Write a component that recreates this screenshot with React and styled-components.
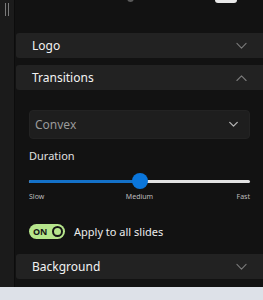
import { useState } from "react";
import styled, { createGlobalStyle } from "styled-components";

const GlobalStyle = createGlobalStyle`
  html, body {
    margin: 0;
    padding: 0;
    background: #dde1e8;
  }
  body {
    font-family: "Noto Sans", "Liberation Sans", sans-serif;
  }
`;

function Chevron({ up, color = "#7a7a7a", width = 11, strokeWidth = 1.2 }) {
  return (
    <svg width={width} height={width / 2 + 2} viewBox="0 0 12 8" fill="none">
      <polyline
        points={up ? "1,7 6,2 11,7" : "1,1.5 6,6.5 11,1.5"}
        stroke={color}
        strokeWidth={strokeWidth}
        strokeLinecap="round"
        strokeLinejoin="round"
      />
    </svg>
  );
}

function Section({ title, open, children }) {
  return (
    <SectionBox>
      <SectionHeader>
        <span>{title}</span>
        <Chevron up={open} />
      </SectionHeader>
      {open && <SectionBody>{children}</SectionBody>}
    </SectionBox>
  );
}

function App() {
  const [duration, setDuration] = useState(50);
  const [applyAll, setApplyAll] = useState(true);

  return (
    <>
      <GlobalStyle />
      <Sidebar>
        <Rail>
          <Handle />
        </Rail>
        <Panel>
          <TopRow>
            <TopDot />
            <TopPill />
          </TopRow>
          <Section title="Logo" />
          <Section title="Transitions" open>
            <Select>
              <span>Convex</span>
              <Chevron color="#b0b0b0" width={9} strokeWidth={1.8} />
            </Select>
            <FieldLabel>Duration</FieldLabel>
            <Slider>
              <Track>
                <Fill style={{ width: `${duration}%` }} />
              </Track>
              <Thumb style={{ left: `${duration}%` }} />
              <RangeInput
                type="range"
                min="0"
                max="100"
                value={duration}
                onChange={(e) => setDuration(Number(e.target.value))}
              />
            </Slider>
            <Ticks>
              <Tick>Slow</Tick>
              <Tick $align="center">Medium</Tick>
              <Tick $align="end">Fast</Tick>
            </Ticks>
            <ToggleRow>
              <Toggle $on={applyAll} onClick={() => setApplyAll(!applyAll)}>
                <span>{applyAll ? "ON" : "OFF"}</span>
                <Knob />
              </Toggle>
              <ToggleLabel>Apply to all slides</ToggleLabel>
            </ToggleRow>
          </Section>
          <Section title="Background" />
        </Panel>
      </Sidebar>
    </>
  );
}

const Sidebar = styled.div`
  display: flex;
  height: 287px;
  overflow: hidden;
  background: #121212;
`;

const Rail = styled.div`
  width: 15px;
  flex-shrink: 0;
  background: #1b1b1b;
  border-right: 1px solid #0c0c0c;
  display: flex;
  justify-content: center;
  padding-top: 3px;
  box-sizing: border-box;
`;

const Handle = styled.div`
  width: 2px;
  height: 13px;
  border-left: 1px solid #7a7a7a;
  border-right: 1px solid #7a7a7a;
`;

const Panel = styled.div`
  flex: 1;
  display: flex;
  flex-direction: column;
  gap: 7px;
  padding-left: 1px;
  padding-bottom: 6px;
`;

const TopRow = styled.div`
  height: 26px;
  display: flex;
  align-items: flex-start;
`;

const TopDot = styled.div`
  margin-left: 111px;
  margin-top: -6px;
  width: 7px;
  height: 8px;
  border-radius: 50%;
  background: #5a5a5a;
`;

const TopPill = styled.div`
  margin-left: 81px;
  margin-top: -10px;
  width: 22px;
  height: 13px;
  border-radius: 3px;
  background: #e8e8e8;
`;

const SectionBox = styled.div`
  display: flex;
  flex-direction: column;
`;

const SectionHeader = styled.div`
  height: 25px;
  background: #222222;
  border-radius: 3px 0 0 3px;
  display: flex;
  align-items: center;
  justify-content: space-between;
  padding: 0 16px;
  color: #f2f2f2;
  font-size: 12px;
  font-weight: 400;
`;

const SectionBody = styled.div`
  display: flex;
  flex-direction: column;
  padding: 20px 13px 8px 13px;
`;

const Select = styled.div`
  height: 29px;
  box-sizing: border-box;
  background: #1e1e1e;
  border: 1px solid #232323;
  border-radius: 4px;
  display: flex;
  align-items: center;
  justify-content: space-between;
  padding: 0 11px 0 5px;
  color: #9a9a9a;
  font-size: 12px;
`;

const FieldLabel = styled.div`
  margin-top: 10px;
  color: #e0e0e0;
  font-size: 11px;
  line-height: 14px;
`;

const Slider = styled.div`
  position: relative;
  height: 18px;
  margin-top: 9px;
  display: flex;
  align-items: center;
`;

const Track = styled.div`
  width: 100%;
  height: 3px;
  background: #e2e2e2;
  border-radius: 2px;
  overflow: hidden;
`;

const Fill = styled.div`
  height: 100%;
  background: #1471c8;
`;

const Thumb = styled.div`
  position: absolute;
  top: 1px;
  width: 16px;
  height: 16px;
  margin-left: -8px;
  border-radius: 50%;
  background: #0a76dc;
`;

const RangeInput = styled.input`
  position: absolute;
  inset: 0;
  width: 100%;
  margin: 0;
  opacity: 0;
  cursor: pointer;
`;

const Ticks = styled.div`
  display: grid;
  grid-template-columns: 1fr auto 1fr;
  margin-top: 2px;
`;

const Tick = styled.span`
  justify-self: ${(p) => p.$align || "start"};
  color: #bdbdbd;
  font-size: 7px;
  line-height: 10px;
`;

const ToggleRow = styled.div`
  display: flex;
  align-items: center;
  gap: 9px;
  margin-top: 22px;
`;

const Toggle = styled.div`
  width: 36px;
  height: 15px;
  box-sizing: border-box;
  border-radius: 8px;
  background: ${(p) => (p.$on ? "#b6e58c" : "#555")};
  display: flex;
  align-items: center;
  justify-content: space-between;
  padding: 0 2px 0 4px;
  cursor: pointer;
  span {
    color: #161616;
    font-size: 9px;
    font-weight: 700;
    line-height: 1;
  }
`;

const Knob = styled.div`
  width: 11px;
  height: 11px;
  box-sizing: border-box;
  border-radius: 50%;
  border: 2px solid #141414;
`;

const ToggleLabel = styled.span`
  color: #ececec;
  font-size: 11px;
`;

export default App;
